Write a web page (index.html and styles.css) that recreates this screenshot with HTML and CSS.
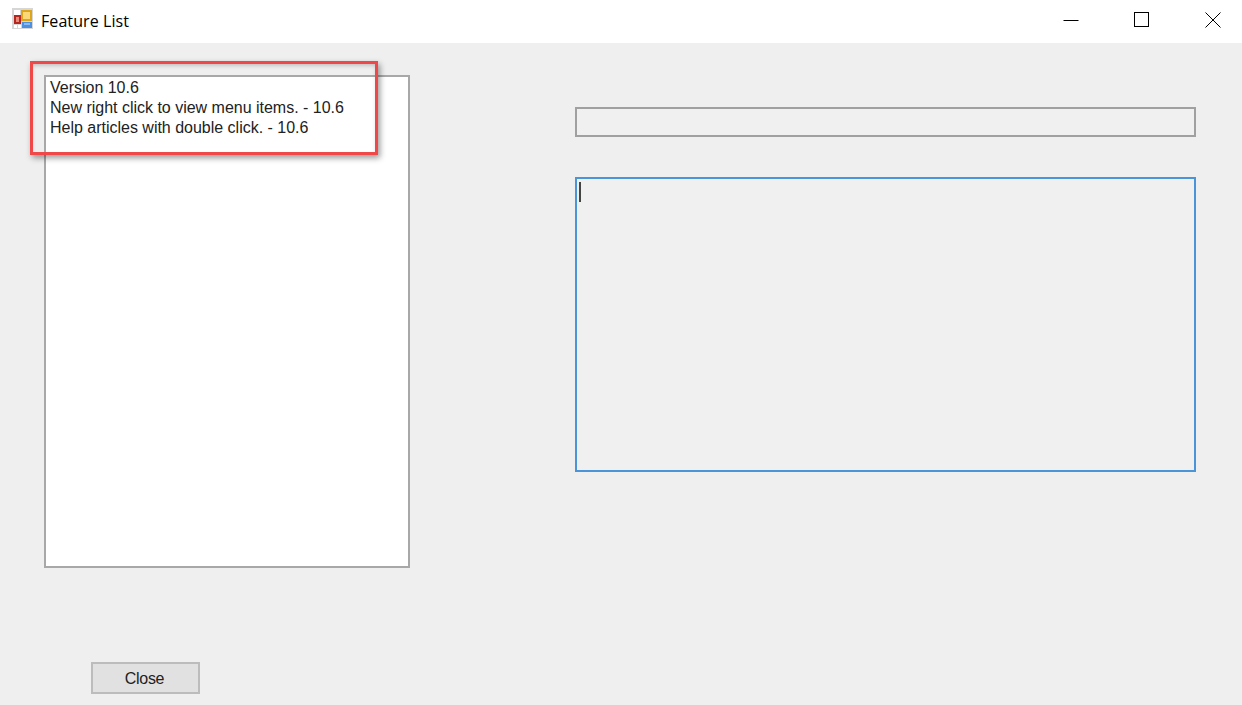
FILE: index.html
```html
<!DOCTYPE html>
<html lang="en">
<head>
<meta charset="utf-8">
<title>Feature List</title>
<link rel="stylesheet" href="styles.css">
</head>
<body>
<div class="window">
  <header class="titlebar">
    <svg class="app-icon" width="21" height="21" viewBox="0 0 21 21">
      <rect x="0" y="0" width="21" height="21" fill="#d6d6d6"/>
      <rect x="2" y="2" width="6" height="5" fill="#fff"/>
      <rect x="2" y="17" width="3" height="3" fill="#fff"/>
      <rect x="6" y="17" width="3" height="3" fill="#fff"/>
      <rect x="2" y="7" width="7" height="9" fill="#b5261e"/>
      <rect x="4" y="9" width="3" height="5" fill="#e88a78"/>
      <rect x="9" y="2" width="11" height="11" fill="#dca51c"/>
      <rect x="11" y="4" width="7" height="7" fill="#f8d878"/>
      <rect x="10" y="14" width="10" height="6" fill="#4d8fe0"/>
      <rect x="12" y="15" width="6" height="2" fill="#8db9ee"/>
    </svg>
    <span class="title">Feature List</span>
    <div class="controls">
      <svg class="ctl" width="16" height="16" viewBox="0 0 16 16"><path d="M0.5 8.5H15.5" stroke="#000" fill="none"/></svg>
      <svg class="ctl" width="16" height="16" viewBox="0 0 16 16"><rect x="0.5" y="0.5" width="14" height="14" stroke="#000" fill="none"/></svg>
      <svg class="ctl" width="16" height="16" viewBox="0 0 16 16"><path d="M0.5 0.5L15.5 15.5M15.5 0.5L0.5 15.5" stroke="#000" fill="none"/></svg>
    </div>
  </header>
  <main class="client">
    <section class="left">
      <div class="listbox">
        <div class="item">Version 10.6</div>
        <div class="item">New right click to view menu items. - 10.6</div>
        <div class="item">Help articles with double click. - 10.6</div>
      </div>
      <button class="close" type="button">Close</button>
    </section>
    <section class="right">
      <div class="field"></div>
      <div class="memo"><span class="caret"></span></div>
    </section>
    <div class="callout"></div>
  </main>
</div>
</body>
</html>
```
FILE: styles.css
```css
* { box-sizing: border-box; }
html, body { margin: 0; height: 100%; }
body { background: #efefef; font-family: "Liberation Sans", Arial, sans-serif; overflow: hidden; }
.window { width: 1242px; height: 705px; display: flex; flex-direction: column; }
.titlebar { height: 43px; background: #fff; display: flex; align-items: center; padding-left: 12px; flex: none; }
.app-icon { margin-top: -6px; }
.title { margin: -2px 0 0 8px; font: 16px/20px "Open Sans", "Noto Sans", sans-serif; color: #000; letter-spacing: 0.08px; }
.controls { margin-left: auto; display: flex; gap: 55px; padding-right: 21px; margin-top: -3px; }
.ctl { display: block; }
.client { position: relative; flex: 1; display: flex; background: #efefef; }
.left { width: 410px; padding: 32px 0 0 44px; flex: none; }
.listbox { width: 366px; height: 493px; background: #fff; border: 2px solid #a8a8a8; padding: 1px 4px; font-size: 16px; line-height: 20px; color: #222; }
.item { white-space: nowrap; letter-spacing: -0.01px; }
.close { display: block; margin: 94px 0 0 47px; width: 109px; height: 32px; background: #e1e1e1; border: 2px solid #bcbcbc; font: 16px "Liberation Sans", Arial, sans-serif; letter-spacing: -0.3px; color: #222; padding: 2px 2px 0 0; }
.right { margin-left: 165px; width: 621px; padding-top: 64px; flex: none; }
.field { height: 30px; border: 2px solid #a0a0a0; background: #f0f0f0; }
.memo { margin-top: 40px; height: 295px; border: 2px solid #4a94da; background: #f0f0f0; padding: 3px 0 0 2px; }
.caret { display: block; width: 2px; height: 20px; background: #444; }
.callout { position: absolute; left: 30px; top: 18px; width: 348px; height: 94px; border: 3px solid #f04848; box-shadow: 2px 3px 6px rgba(0,0,0,.4), inset 0 3px 5px -2px rgba(0,0,0,.25); }
```
